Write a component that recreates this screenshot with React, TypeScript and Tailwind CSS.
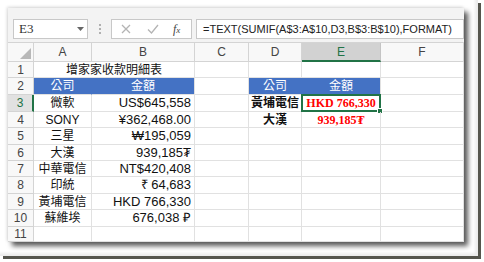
import type { ReactNode } from 'react';

const sans = "font-['Liberation_Sans','Noto_Sans_CJK_TC',sans-serif]";

const ledger = [
  { name: '微軟', amount: 'US$645,558' },
  { name: 'SONY', amount: '¥362,468.00' },
  { name: '三星', amount: '₩195,059' },
  { name: '大漢', amount: '939,185₮' },
  { name: '中華電信', amount: 'NT$420,408' },
  { name: '印統', amount: '₹ 64,683' },
  { name: '黃埔電信', amount: 'HKD 766,330' },
  { name: '蘇維埃', amount: '676,038 ₽' },
];

const lookup = [
  { name: '黃埔電信', amount: 'HKD 766,330' },
  { name: '大漢', amount: '939,185₮' },
];

const columns = ['A', 'B', 'C', 'D', 'E', 'F'];

function Cell({ children, className = '' }: { children?: ReactNode; className?: string }) {
  return (
    <div className={`flex items-center border-r border-b border-[#e1e1e1] overflow-hidden whitespace-nowrap ${className}`}>
      {children}
    </div>
  );
}

function RowHead({ n, active }: { n: number; active?: boolean }) {
  return active ? (
    <div className="flex items-center justify-center bg-[#e1e1e1] border-b border-[#d4d4d4] border-r-2 border-r-[#217346] text-[12px] text-[#217346]">
      {n}
    </div>
  ) : (
    <div className="flex items-center justify-center bg-[#f8f8f8] border-r border-b border-[#d4d4d4] text-[12px] text-[#444]">
      {n}
    </div>
  );
}

export default function App() {
  return (
    <div className="w-[484px] h-[262px] bg-white">
      <div className="w-[478px] h-[256px] pt-[8px] pl-[8px] bg-white shadow-[inset_-3px_-3px_3px_rgba(0,0,0,0.08),3px_3px_0_#55554d]">
        <div className={`w-[456px] h-[234px] bg-white shadow-[4px_4px_5px_rgba(0,0,0,0.65),-1px_-1px_3px_rgba(0,0,0,0.15)] ${sans}`}>
          {/* Formula bar */}
          <div className="flex items-start h-[35px] pt-[11px] pl-[5px] bg-[#f3f3f3] border-b border-[#d4d4d4]">
            <div className="flex items-center justify-between w-[75px] h-[20px] pl-[5px] pr-[3px] bg-white border border-[#c8c8c8]">
              <span className="font-['Liberation_Serif',serif] text-[13px] text-[#333]">E3</span>
              <svg width="7" height="4" viewBox="0 0 7 4">
                <path d="M0 0h7L3.5 4z" fill="#666" />
              </svg>
            </div>
            <div className="flex flex-col gap-[2px] ml-[11px] mt-[5px]">
              <span className="w-[2px] h-[2px] bg-[#b0b0b0]" />
              <span className="w-[2px] h-[2px] bg-[#b0b0b0]" />
              <span className="w-[2px] h-[2px] bg-[#b0b0b0]" />
            </div>
            <div className="flex items-center w-[81px] h-[20px] ml-[10px] bg-white border border-[#c8c8c8]">
              <svg width="10" height="10" viewBox="0 0 10 10" className="ml-[9px]">
                <path d="M1 1l8 8M9 1l-8 8" stroke="#b4b4b4" strokeWidth="1.3" />
              </svg>
              <svg width="12" height="10" viewBox="0 0 12 10" className="ml-[16px]">
                <path d="M1 5.5l3.5 3.5L11 1" stroke="#b4b4b4" strokeWidth="1.3" fill="none" />
              </svg>
              <span className="ml-[14px] font-['Liberation_Serif',serif] italic text-[12px] text-[#444]">
                f<span className="text-[9px]">x</span>
              </span>
            </div>
            <div className="flex items-center flex-1 h-[20px] ml-[4px] pl-[6px] bg-white border border-[#c8c8c8] text-[11px] text-[#222] whitespace-nowrap overflow-hidden">
              =TEXT(SUMIF(A$3:A$10,D3,B$3:B$10),FORMAT)
            </div>
          </div>

          {/* Sheet */}
          <div className="grid grid-cols-[26px_58px_103px_54px_53px_79px_83px] grid-rows-[19px_16px_17px_17px_16px_17px_16px_16px_17px_16px_17px_15px] overflow-hidden">
            <div className="relative bg-[#f8f8f8] border-r border-b border-[#d4d4d4]">
              <svg width="11" height="11" viewBox="0 0 11 11" className="absolute right-[2px] bottom-[2px]">
                <path d="M11 0v11H0z" fill="#b8b8b8" />
              </svg>
            </div>
            {columns.map((c) =>
              c === 'E' ? (
                <div key={c} className="flex items-center justify-center bg-[#d2d2d2] border-r border-[#c4c4c4] border-b-2 border-b-[#217346] text-[12px] text-[#217346]">
                  {c}
                </div>
              ) : (
                <div key={c} className="flex items-center justify-center bg-[#f8f8f8] border-r border-b border-[#d4d4d4] text-[12px] text-[#444]">
                  {c}
                </div>
              )
            )}

            {/* Row 1 */}
            <RowHead n={1} />
            <Cell className="col-span-2 justify-center text-[12px] text-[#111]">增家家收款明細表</Cell>
            <Cell />
            <Cell />
            <Cell />
            <Cell />

            {/* Row 2 */}
            <RowHead n={2} />
            <Cell className="justify-center bg-[#4472c4] border-r-[#4472c4] text-[12px] text-white">公司</Cell>
            <Cell className="justify-center bg-[#4472c4] text-[12px] text-white">金額</Cell>
            <Cell />
            <Cell className="justify-center bg-[#4472c4] border-r-[#4472c4] text-[12px] text-white">公司</Cell>
            <Cell className="justify-center bg-[#4472c4] text-[12px] text-white">金額</Cell>
            <Cell />

            {ledger.map((row, i) => {
              const hit = lookup[i];
              return [
                <RowHead key={`h${i}`} n={i + 3} active={i === 0} />,
                <Cell key={`a${i}`} className="justify-center text-[12px] text-[#111]">{row.name}</Cell>,
                <Cell key={`b${i}`} className="justify-end pr-[3px] text-[13px] text-[#111]">{row.amount}</Cell>,
                <Cell key={`c${i}`} />,
                <Cell key={`d${i}`} className="justify-center text-[12px] font-bold text-[#111]">{hit?.name}</Cell>,
                <div key={`e${i}`} className="relative flex items-center justify-center border-r border-b border-[#e1e1e1] whitespace-nowrap">
                  {hit && (
                    <span className="font-['Liberation_Serif','DejaVu_Serif',serif] font-bold text-[12px] text-[#ff0000]">
                      {hit.amount}
                    </span>
                  )}
                  {i === 0 && (
                    <div className="absolute -left-[1px] -top-[1px] -right-[1px] -bottom-[1px] border-2 border-[#217346]">
                      <div className="absolute -right-[4px] -bottom-[4px] w-[6px] h-[6px] bg-[#217346] border border-white" />
                    </div>
                  )}
                </div>,
                <Cell key={`f${i}`} />,
              ];
            })}

            {/* Row 11 */}
            <RowHead n={11} />
            <Cell />
            <Cell />
            <Cell />
            <Cell />
            <Cell />
            <Cell />
          </div>
        </div>
      </div>
    </div>
  );
}
